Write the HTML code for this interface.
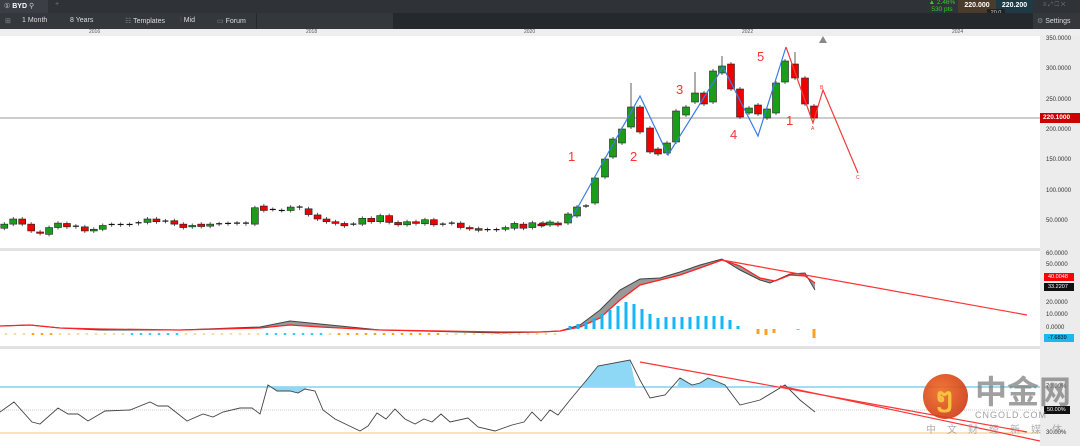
<!DOCTYPE html><html><head><meta charset="utf-8"><style>
body{margin:0;width:1080px;height:446px;overflow:hidden;background:#fff;font-family:"Liberation Sans",sans-serif;position:relative}
.a{position:absolute}
.tb{font-size:7px;color:#ddd;white-space:nowrap}
.ax{font-size:6px;color:#333;position:absolute;left:1046px}
</style></head><body>
<div class="a" style="left:0;top:0;width:1080px;height:13px;background:#2f3237"></div>
<div class="a" style="left:0;top:0;width:48px;height:13px;background:#3b3e44"></div>
<div class="a tb" style="left:4px;top:2px;color:#ccc">① <b style="color:#fff">BYD</b> ⚲</div>
<div class="a tb" style="left:55px;top:1px;color:#777">+</div>
<div class="a" style="left:926px;top:0;width:32px;height:13px;font-size:6.5px;color:#3c3;line-height:6.5px;text-align:center;white-space:nowrap">▲ 2.46%<br>530 pts</div>
<div class="a" style="left:958px;top:0;width:38px;height:13px;background:#4a3b2a;color:#fff;font-size:7px;font-weight:bold;text-align:center;line-height:11px">220.000</div>
<div class="a" style="left:996px;top:0;width:37px;height:13px;background:#1e3a44;color:#fff;font-size:7px;font-weight:bold;text-align:center;line-height:11px">220.200</div>
<div class="a" style="left:987px;top:9px;width:18px;height:8px;background:#222;color:#ccc;font-size:5.5px;text-align:center;line-height:8px">20.0</div>
<div class="a tb" style="left:1043px;top:2px;color:#777;font-size:6px">≡ ⤢ ☐ ✕</div>
<div class="a" style="left:0;top:13px;width:1080px;height:16px;background:#25282c"></div>
<div class="a" style="left:0;top:13px;width:256px;height:16px;background:#34373c"></div>
<div class="a" style="left:257px;top:13px;width:136px;height:16px;background:#34373c"></div>
<div class="a" style="left:1033px;top:13px;width:47px;height:16px;background:#34373c"></div>
<div class="a tb" style="left:5px;top:17px;color:#888">⊞</div>
<div class="a tb" style="left:22px;top:17px">1 Month</div>
<div class="a tb" style="left:70px;top:17px">8 Years</div>
<div class="a tb" style="left:125px;top:17px"><span style="color:#888">☷</span> Templates</div>
<div class="a tb" style="left:180px;top:17px"><span style="color:#888">⫶</span> Mid</div>
<div class="a tb" style="left:217px;top:17px"><span style="color:#888">▭</span> Forum</div>
<div class="a tb" style="left:1037px;top:17px"><span style="color:#888">⚙</span> Settings</div>
<div class="a" style="left:0;top:29px;width:1080px;height:7px;background:#eee;font-size:5px;color:#555"><span class="a" style="left:89px">2016</span><span class="a" style="left:306px">2018</span><span class="a" style="left:524px">2020</span><span class="a" style="left:742px">2022</span><span class="a" style="left:952px">2024</span></div>
<div class="a" style="left:1040px;top:36px;width:40px;height:410px;background:#ececec"></div>
<div class="a" style="left:0;top:248px;width:1040px;height:3px;background:#e2e2e2"></div>
<div class="a" style="left:0;top:346px;width:1040px;height:3px;background:#e2e2e2"></div>
<div class="ax" style="top:36px">350.0000</div><div class="ax" style="top:66px">300.0000</div><div class="ax" style="top:97px">250.0000</div><div class="ax" style="top:127px">200.0000</div><div class="ax" style="top:157px">150.0000</div><div class="ax" style="top:188px">100.0000</div><div class="ax" style="top:218px">50.0000</div>
<div class="a" style="left:1040px;top:113px;width:40px;height:10px;background:#c00;color:#fff;font-size:6.5px;font-weight:bold;line-height:10px;padding-left:3px;box-sizing:border-box">220.1000</div>
<div class="ax" style="top:251px">60.0000</div><div class="ax" style="top:262px">50.0000</div><div class="ax" style="top:300px">20.0000</div><div class="ax" style="top:312px">10.0000</div><div class="ax" style="top:325px">0.0000</div>
<div class="a" style="left:1044px;top:273px;width:30px;height:8px;background:#f00;color:#fff;font-size:5.5px;line-height:8px;padding-left:4px;box-sizing:border-box">40.0048</div>
<div class="a" style="left:1044px;top:283px;width:30px;height:8px;background:#111;color:#fff;font-size:5.5px;line-height:8px;padding-left:4px;box-sizing:border-box">33.2207</div>
<div class="a" style="left:1044px;top:334px;width:30px;height:8px;background:#1bb8ee;color:#000;font-size:5.5px;line-height:8px;padding-left:4px;box-sizing:border-box">-7.6839</div>
<div class="ax" style="top:384px">70.00%</div><div class="ax" style="top:430px">30.00%</div>
<div class="a" style="left:1044px;top:406px;width:26px;height:8px;background:#111;color:#fff;font-size:5.5px;line-height:8px;padding-left:3px;box-sizing:border-box">50.00%</div>
<svg class="a" style="left:0;top:0" width="1040" height="446" id="s"></svg>
<div class="a" style="left:923px;top:374px;width:45px;height:45px;border-radius:50%;background:radial-gradient(circle at 40% 40%,#f06a20,#c22a10);opacity:.9"></div>
<div class="a" style="left:936px;top:382px;font-size:26px;font-weight:bold;color:#f8c040">ໆ</div>
<div class="a" style="left:975px;top:372px;font-size:32px;font-weight:bold;color:rgba(120,120,120,.7);font-family:'Noto Sans CJK SC',sans-serif;line-height:36px;white-space:nowrap">中金网</div>
<div class="a" style="left:975px;top:410px;font-size:9px;color:rgba(120,120,120,.7);letter-spacing:1px;white-space:nowrap">CNGOLD.COM</div>
<div class="a" style="left:926px;top:423px;font-size:10px;line-height:12px;color:rgba(140,140,140,.7);letter-spacing:11px;font-family:'Noto Sans CJK SC',sans-serif;white-space:nowrap">中文财经新媒体</div>
<script>
var S=document.getElementById('s'),h='';
function L(x1,y1,x2,y2,c,w,d){h+='<line x1="'+x1+'" y1="'+y1+'" x2="'+x2+'" y2="'+y2+'" stroke="'+c+'" stroke-width="'+(w||1)+'"'+(d?' stroke-dasharray="'+d+'"':'')+'/>';}
function P(pts,c,w,f){h+='<polyline points="'+pts.map(p=>p.join(',')).join(' ')+'" stroke="'+c+'" stroke-width="'+(w||1)+'" fill="'+(f||'none')+'"/>';}
function T(x,y,t,c,s){h+='<text x="'+x+'" y="'+y+'" fill="'+c+'" font-size="'+s+'" font-family="Liberation Sans">'+t+'</text>';}
function C(x,o,c,hi,lo){var t=Math.min(o,c),b=Math.max(o,c);hi=hi||t-2;lo=lo||b+2;L(x,hi,x,lo,'#333',0.8);if(b-t<1.2){L(x-3,t,x+3,t,'#111',1.2);}else h+='<rect x="'+(x-3.5)+'" y="'+t+'" width="7" height="'+(b-t)+'" fill="'+(c<o?'#1a9e1a':'#e00')+'" stroke="#222" stroke-width="0.6"/>';}
var E=[[112,100],[100,85],[85,100],[100,120],[123,127],[130,110],[110,97],[98,108],[106,108],[108,120],[120,115],[115,104],[101,102],[101,102],[101,102],[98,96],[95,85],[85,93],[91,92],[90,100],[100,110],[108,104],[100,107],[106,100],[99,100],[98,99],[97,98],[97,99],[100,52],[47,60],[57,57],[60,60],[60,50],[50,53],[55,72],[73,85],[85,93],[93,98],[98,105],[100,100],[100,83],[83,93],[93,75],[75,95],[95,102],[102,93],[93,98],[99,87],[87,102],[100,101],[97,98],[97,110],[110,114],[113,118],[116,117],[116,117],[115,110],[112,98],[100,112],[110,96],[100,105]];
L(0,118,1040,118,'#777',0.8);
E.forEach((e,i)=>C(4.3+i*8.95,190+e[0]/2.93,190+e[1]/2.93));
C(543,223,225);C(550,225,222);C(558,223,225);
var Lt=[[568,223,214],[577,216,207],[586,206,206],[595,203,178],[605,177,159],[613,157,139],[622,143,129],[631,127,107,83],[640,107,132],[650,128,152],[658,149,154],[667,153,143],[676,142,111],[686,115,107],[695,102,93,72],[704,93,104],[713,102,71],[722,73,66,56],[731,64,89],[740,89,117],[749,113,108],[758,105,114],[767,118,109],[776,113,83],[785,82,61],[795,64,78,52],[805,78,104],[814,106,118]];
Lt.forEach(c=>C(c[0],c[1],c[2],c[3]));
P([[569,223],[640,96],[668,155],[723,67],[758,136],[786,47]],'#3a7be8',1.2);
P([[786,47],[813,123],[823,90],[858,173]],'#f03c3c',1.2);
T(568,161,'1','#f33',13);T(630,161,'2','#f33',13);T(676,94,'3','#f33',13);T(730,139,'4','#f33',13);T(757,61,'5','#f33',13);T(786,125,'1','#f33',13);
T(820,89,'B','#f33',5);T(811,130,'A','#f33',5);T(856,179,'C','#f33',5);
h+='<path d="M819 43 L823 36 L827 43 Z" fill="#888"/>';
var red=[[0,326],[30,325],[60,328],[100,329],[180,330],[260,328],[290,325],[320,327],[380,330],[500,332],[540,332],[560,331],[580,327],[600,318],[620,300],[640,285],[660,280],[680,275],[700,268],[722,260],[740,266],[760,278],[775,281],[790,275],[805,276],[815,283]];
var gr=[[0,326],[30,325],[60,328],[100,330],[180,330],[260,327],[290,321],[320,324],[380,330],[500,333],[540,332],[560,331],[580,325],[600,310],[620,290],[640,279],[660,278],[680,272],[700,265],[722,259],[740,270],[760,280],[770,283],[790,274],[805,273],[815,290]];
P(gr.concat(red.slice().reverse()),'none',0,'#999');
P(gr,'#444',1);P(red,'#f22',1.3);
for(var x=6;x<560;x+=9){var b=(x>260&&x<330)||(x>130&&x<180)?'#3cc8f5':'#fcd9a0';if(x>30&&x<60||x>330&&x<440)b='#ffa020';L(x,333,x,335,b,2.5);}
var hb=[[570,326],[578,324],[586,322],[594,318],[602,314],[610,310],[618,306],[626,302],[634,304],[642,309],[650,314],[658,318],[666,317],[674,317],[682,317],[690,317],[698,316],[706,316],[714,316],[722,316],[730,320],[738,326]];
hb.forEach(b=>h+='<rect x="'+(b[0]-1.5)+'" y="'+b[1]+'" width="3" height="'+(329-b[1])+'" fill="#19b5f5"/>');
[[758,334],[766,335],[774,333],[798,330],[814,338]].forEach(b=>h+='<rect x="'+(b[0]-1.5)+'" y="329" width="3" height="'+(b[1]-329)+'" fill="#ffa020"/>');
L(722,260,1027,315,'#f33',1.2);
L(0,387,1040,387,'#4ab8e8',0.9);L(0,410,1040,410,'#bbb',0.8,'1,1');L(0,433,1040,433,'#fcd9a0',1.5);
var r=[[0,412],[14,402],[32,422],[40,424],[58,408],[68,414],[78,414],[88,421],[105,411],[130,410],[150,402],[158,406],[168,406],[187,421],[203,414],[213,417],[223,412],[240,408],[252,408],[260,414],[268,385],[277,391],[290,391],[298,393],[305,389],[315,391],[323,410],[335,419],[360,431],[368,426],[377,413],[386,419],[395,409],[405,419],[415,424],[424,419],[432,422],[441,414],[450,422],[468,418],[478,427],[495,431],[512,425],[524,422],[532,412],[541,421],[550,410],[558,415],[570,400],[585,382],[598,366],[630,360],[640,380],[650,398],[665,395],[680,378],[692,385],[700,383],[708,378],[718,382],[725,385],[740,405],[760,400],[785,385],[800,400],[815,412]];
h+='<path d="M268 387 L268 385 L277 391 L290 391 L298 393 L305 389 L308 387 Z" fill="#8fd8f5"/>';
h+='<path d="M582 387 L585 382 L598 366 L630 360 L636 387 Z M677 387 L680 378 L692 385 L700 383 L708 378 L718 382 L725 385 L726 387 Z" fill="#8fd8f5"/>';
P(r,'#444',0.9);
L(640,362,1027,432,'#f33',1.2);L(780,386,1040,441,'#f33',1.2);
S.innerHTML=h;
</script>
</body></html>
